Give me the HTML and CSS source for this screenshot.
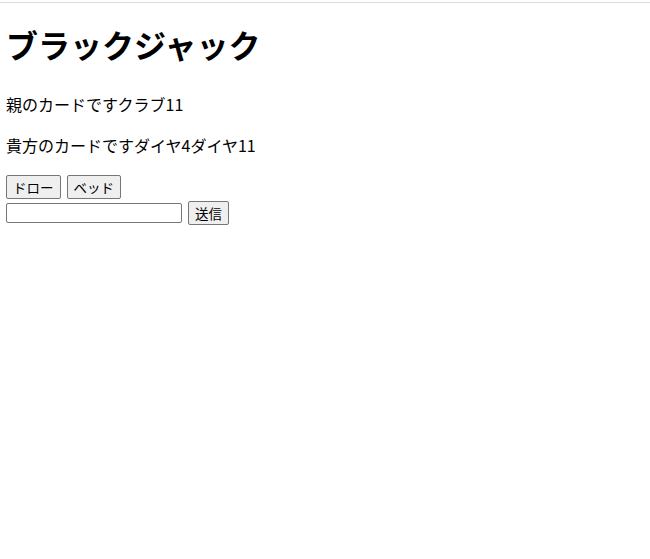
FILE: index.html
```html
<!DOCTYPE html>
<html lang="ja">
<head>
  <meta charset="UTF-8" />
  <title>ブラックジャック</title>
  <link rel="stylesheet" href="styles.css">
</head>
<body>
  <div class="top-line"></div>
  <h1 class="title">ブラックジャック</h1>

  <p class="cards">親のカードですクラブ11</p>
  <p class="cards">貴方のカードですダイヤ4ダイヤ11</p>

  <div class="actions">
    <button class="btn">ドロー</button>
    <button class="btn">ベッド</button>
  </div>
  <form class="bet-form" onsubmit="return false;">
    <input type="text" class="bet-input" />
    <button class="btn btn-send">送信</button>
  </form>
</body>
</html>
```

FILE: styles.css
```css
body {
  font-family: "Noto Sans CJK JP", "Noto Sans", sans-serif;
  margin: 0;
  padding: 0 6px;
  color: #000;
  background: #fff;
}

.top-line {
  margin: 2px -6px 0;
  height: 1px;
  background: #dcdcdc;
}

h1.title {
  font-size: 32px;
  font-weight: bold;
  line-height: 40px;
  margin: 21px 0 28px;
}

p.cards {
  font-size: 16px;
  line-height: 25px;
  margin: 0 0 16px;
}

.actions {
  margin-top: 17px;
  display: flex;
  gap: 6px;
}

.btn {
  font-family: inherit;
  font-size: 13.5px;
  height: 24px;
  line-height: 18px;
  padding: 2px 6px;
  background: #efefef;
  border: 1px solid #767676;
  border-radius: 2px;
  color: #000;
}

.bet-form {
  display: flex;
  align-items: center;
  gap: 6px;
  margin-top: 2px;
}

.bet-input {
  width: 172px;
  height: 18px;
  padding: 0 1px;
  border: 1px solid #767676;
  border-radius: 2px;
  font-size: 13px;
}
```
